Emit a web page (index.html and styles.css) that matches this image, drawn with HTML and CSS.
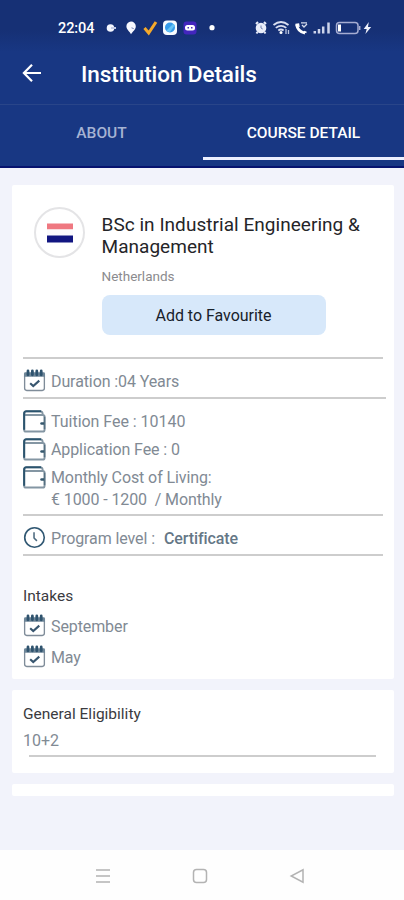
FILE: index.html
```
<!DOCTYPE html>
<html lang="en">
<head>
<meta charset="utf-8">
<title>Institution Details</title>
<link rel="stylesheet" href="styles.css">
</head>
<body>
<svg class="defs" width="0" height="0" aria-hidden="true">
  <symbol id="calendar" viewBox="0 0 24 24">
    <path d="M1.700 7v13.200q0 2.200 2.200 2.200h16.200q2.200 0 2.200-2.200V7" fill="none" stroke="#7f8c99" stroke-width="1.400"/>
    <path d="M1 8V5q0-1.500 1.500-1.500h19Q23 3.500 23 5v3Z" fill="#6d8597"/>
    <path d="M5.200 2v4M9.800 2v4M14.400 2v4M19 2v4" stroke="#2f536e" stroke-width="2.900" stroke-linecap="round"/>
    <path d="m7.500 14.800 3.200 3 6.300-5.700" fill="none" stroke="#38566f" stroke-width="2.200"/>
  </symbol>
  <symbol id="wallet" viewBox="0 0 24 24">
    <path d="M20.500 5.300V4q0-2.600-2.600-2.600H3.500Q1.200 1.400 1.200 3.700v16.800q0 2 2 2h17.300q2 0 2-2V7.300q0-2-2-2H3.500Q1.200 5.300 1.200 3.500" fill="none" stroke="#8496a3" stroke-width="2"/>
    <path d="M19 1.400H3.500Q1.200 1.400 1.200 3.700v17" fill="none" stroke="#2b546e" stroke-width="2.100"/>
    <path d="M22.500 7v13" stroke="#557082" stroke-width="1.600"/>
    <path d="M22 12.800h-2.700q-1.300 0-1.300 1.300t1.300 1.300H22Z" fill="#36586e"/>
  </symbol>
</svg>
<header class="header">
  <div class="status">
    <span class="time">22:04</span>
    <svg class="notices" viewBox="100 18 120 20">
      <circle cx="110.500" cy="28" r="3.800" fill="#f4f6ff"/><path d="M111 27h5v2h-5z" fill="#c3cbe6"/>
      <path d="M131 21.500a4.800 4.800 0 0 1 4.800 4.800c0 3.300-3 5.200-4.800 8-1.200-2.700-4.600-4.700-4.600-8a4.700 4.700 0 0 1 4.600-4.800Z" fill="#f7f8ff"/><path d="M132 27v1.500h2" stroke="#a0abd0" fill="none"/>
      <path d="m144.500 28 4.200 5L156 22" fill="none" stroke="#f5a92b" stroke-width="3"/>
      <rect x="163" y="20.500" width="14" height="14.500" rx="4" fill="#f8fbff"/><circle cx="170" cy="27.500" r="5" fill="#369bea"/><path d="m166 31 7-7 2 1-5 7Z" fill="#65c4f6"/>
      <rect x="183.500" y="21.500" width="13" height="13" rx="3" fill="#4326bd"/><rect x="185" y="25" width="10" height="5.500" rx="2.500" fill="#fff"/><path d="M187.500 27.700h1.500M191 27.700h1.500" stroke="#5137b4" stroke-width="1.500"/>
      <circle cx="212" cy="27.700" r="2.600" fill="#fff"/>
    </svg>
    <svg class="signals" viewBox="250 18 130 20">
      <circle cx="261" cy="28" r="5.300" fill="#e9edfa"/><path d="m256 24 2-2M266 24l-2-2M257.500 32l-1 1.500M264.500 32l1 1.500" stroke="#e9edfa" stroke-width="2"/><path d="M261 25.500V28l1.700 1" fill="none" stroke="#7180ae"/>
      <g fill="none" stroke="#d9def0" stroke-width="1.800"><path d="M273.500 25q7.500-6 15 0M275.800 27.900q5.200-4 10.500 0M278.300 30.500q2.700-2 5.300 0"/></g><circle cx="281" cy="32.500" r="1.500" fill="#fff"/><path d="M286 29v5m2.500-4v4" stroke="#bac4df" stroke-width="1.300"/>
      <path d="M296.500 24.500c.8 4.500 4.100 7.800 8.500 8.600" fill="none" stroke="#fff" stroke-width="2.800"/><path d="M295.500 24.500l3-.5.500 3M304 31.500l2.500 1" stroke="#fff" stroke-width="1.500" fill="none"/><path d="M301 22.800h6M302 25l2 2 3-3" fill="none" stroke="#d3d9ec" stroke-width="1.300"/>
      <path d="M314.800 31v2.500M319 29v4.500M323.200 26.500v7M328.500 22.500v11" stroke="#cdd4eb" stroke-width="2.500"/>
      <rect x="336.500" y="22.500" width="21.500" height="11" rx="3" fill="none" stroke="#a5acd2" stroke-width="1.500"/><path d="M338 24.500h3v7h-3z" fill="#fff"/><path d="M359.700 26v4" stroke="#a5acd2" stroke-width="1.500"/>
      <path d="m368.800 22-5.100 7h3l-1.300 5 5.800-7h-3.200Z" fill="#eff1fb"/>
    </svg>
  </div>
  <div class="bar">
    <svg class="back" viewBox="0 0 20 20"><path d="M19 10H2M10 1.700 1.900 10l8.100 8.300" fill="none" stroke="#fff" stroke-width="2.200"/></svg>
    <h1 class="heading"><span>Institution Details</span></h1>
  </div>
  <nav class="tabs"><div class="tab"><span>ABOUT</span></div><div class="tab active"><span>COURSE DETAIL</span></div></nav>
</header>
<main class="content">
  <section class="card course">
    <div class="summary">
      <div class="emblem"><svg viewBox="0 0 26 20"><path d="M0 .5h26v6H0z" fill="#ef7881"/><path d="M0 6.500h26v6H0z" fill="#fafafc"/><path d="M0 12.500h26v7H0z" fill="#111681"/></svg></div>
      <div class="intro">
        <h2 class="course-name">BSc in Industrial Engineering &amp;<br>Management</h2>
        <div class="country">Netherlands</div>
        <button class="favourite">Add to Favourite</button>
      </div>
    </div>
    <div class="row duration"><svg class="icon"><use href="#calendar"/></svg><span>Duration :04 Years</span></div>
    <div class="fees">
      <div class="row fee"><svg class="icon"><use href="#wallet"/></svg><span class="tuition">Tuition Fee : 10140</span></div>
      <div class="row fee"><svg class="icon"><use href="#wallet"/></svg><span>Application Fee : 0</span></div>
      <div class="row living"><svg class="icon"><use href="#wallet"/></svg><span>Monthly Cost of Living:<br>€ 1000 - 1200&nbsp; / Monthly</span></div>
    </div>
    <div class="row level"><svg class="icon" viewBox="0 0 24 24"><circle cx="12" cy="12" r="10.200" fill="none" stroke="#315873" stroke-width="1.700"/><path d="M11.500 6.500v6l3 3" fill="none" stroke="#4b697e" stroke-width="1.600"/></svg><span>Program level :</span><b>Certificate</b></div>
    <div class="intakes">
      <h3 class="label">Intakes</h3>
      <div class="row intake"><svg class="icon"><use href="#calendar"/></svg><span>September</span></div>
      <div class="row intake"><svg class="icon"><use href="#calendar"/></svg><span>May</span></div>
    </div>
  </section>
  <section class="card eligibility"><h3 class="label">General Eligibility</h3><div class="requirement">10+2</div></section>
  <section class="card blank"></section>
</main>
<footer class="navigation">
  <svg viewBox="0 0 16 16"><path d="M1 2h14M1 8h14M1 14h14"/></svg>
  <svg viewBox="0 0 16 16"><rect x="1.500" y="1.500" width="13" height="13" rx="3"/></svg>
  <svg viewBox="0 0 16 16"><path d="M14 1.800v12.400L2.200 8Z"/></svg>
</footer>
</body>
</html>
```

FILE: styles.css
```
* { box-sizing: border-box; }
body { margin: 0; width: 404px; height: 900px; display: flex; flex-direction: column; overflow: hidden; background: #f2f3fb; font-family: Roboto, sans-serif; color: #818a94; }
svg { display: block; flex: none; }
.defs { position: absolute; }
h1, h2, h3 { margin: 0; font-weight: 400; }
.header { height: 168px; flex: none; background: linear-gradient(#163075 0, #163075 30px, #183783 52px); border-bottom: 2px solid #07136f; color: #fff; }
.status { height: 44px; padding: 12px 24px 0 58px; display: flex; align-items: center; }
.time { width: 42px; padding-top: 1px; font-size: 14.500px; font-weight: 500; line-height: 20px; letter-spacing: -.1px; white-space: nowrap; }
.notices { width: 120px; height: 20px; }
.signals { width: 130px; height: 20px; margin-left: 30px; }
.bar { height: 61px; padding-left: 22px; display: flex; align-items: center; border-bottom: 1px solid #294589; }
.back { width: 20px; height: 20px; margin-top: -2px; }
.heading { margin-left: 39px; font-size: 22.500px; font-weight: 500; letter-spacing: -.08px; }
.tabs { height: 55px; display: grid; grid-template-columns: 203px 201px; }
.tab { padding: 3px 0 0; display: flex; align-items: center; justify-content: center; font-size: 15.500px; font-weight: 500; color: #a6b3d3; border-bottom: 3px solid transparent; }
.active { color: #fff; border-color: #ecefff; }
.content { flex: 1; padding: 17px 10px 0 12px; display: flex; flex-direction: column; gap: 11px; }
.card { background: #fff; border-radius: 2px; padding: 0 8px 0 11px; }
.course { height: 494px; flex: none; }
.summary { height: 174px; padding: 22px 0 0 11px; margin-right: 3px; border-bottom: 2px solid #cdcdcd; display: flex; }
.emblem { width: 51px; height: 51px; border: 2px solid #e4e4e6; border-radius: 50%; display: grid; place-items: center; }
.emblem svg { width: 26px; height: 20px; }
.intro { margin-left: 16.500px; padding-top: 7px; }
.course-name { color: #252528; font-size: 19px; line-height: 22px; letter-spacing: .04px; white-space: nowrap; }
.country { margin-top: 9px; font-size: 13.500px; line-height: 18px; color: #8b8b8e; }
.favourite { display: block; margin: 10px 0 0; width: 224px; height: 40px; border: 0; border-radius: 8px; background: #d7e8fa; color: #18212b; font: 400 16px Roboto, sans-serif; letter-spacing: -.03px; }
.row { display: flex; align-items: center; font-size: 16px; line-height: 22px; letter-spacing: -.1px; white-space: nowrap; }
.row span, .row b { padding-top: 2px; }
.icon { width: 23px; height: 23px; margin-right: 5px; }
.duration { height: 40px; padding-top: 5px; border-bottom: 2px solid #cdcdcd; }
.fees { height: 117px; margin-right: 3px; padding-top: 8px; border-bottom: 2px solid #cdcdcd; }
.fee { height: 28px; }
.tuition { letter-spacing: -.03px; }
.living { align-items: flex-start; padding-top: 3px; }
.living span { padding-top: 1px; }
.level { height: 40px; margin-right: 3px; padding-top: 5px; border-bottom: 2px solid #cdcdcd; }
.level b { margin-left: 9px; font-weight: 500; color: #657786; }
.label { font-size: 15.500px; line-height: 20px; color: #3b3b3f; }
.intakes { padding-top: 30px; }
.intake { height: 31px; }
.intakes .label { margin-bottom: 4px; }
.eligibility { height: 83px; flex: none; padding-top: 14px; }
.requirement { height: 32px; font-size: 16px; line-height: 34px; }
.eligibility::after { content: ""; display: block; height: 2px; margin: -1px 10px 0 6px; background: #cdcdcd; }
.blank { height: 12px; flex: none; }
.navigation { height: 50px; flex: none; padding: 18px 99px 0 95px; display: flex; justify-content: space-between; background: #fefefe; }
.navigation svg { width: 16px; height: 16px; fill: none; stroke: #b3b3b3; stroke-width: 1.500px; }
```
